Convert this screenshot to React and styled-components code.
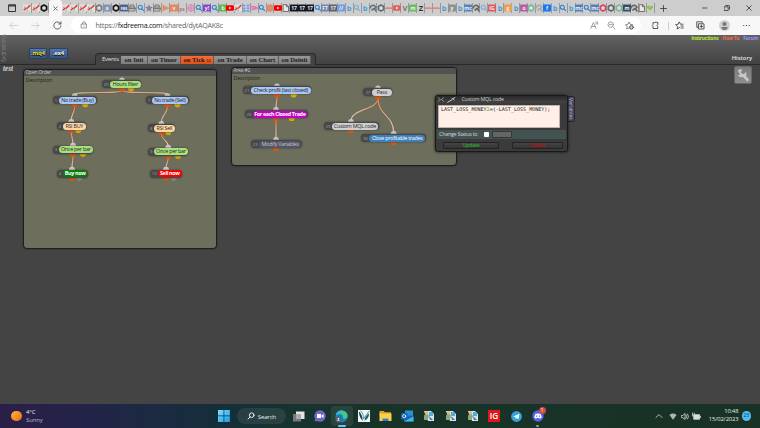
import React from 'react'
import styled, { createGlobalStyle } from 'styled-components'

const GlobalStyle = createGlobalStyle`
  * {
    box-sizing: border-box;
  }

  body {
    margin: 0;
    overflow: hidden;
    font-family: 'Open Sans', 'Noto Sans', sans-serif;
  }
`

const Screen = styled.div`
  display: flex;
  flex-direction: column;
  width: 760px;
  height: 428px;
  background: #444;
`

const TabStrip = styled.div`
  display: flex;
  align-items: center;
  height: 16px;
  padding-left: 7px;
  background: #cdcdcd;
`

const TabMenu = styled.div`
  width: 16.5px;
  height: 16px;
`

const Tab = styled.div`
  flex: none;
  display: flex;
  align-items: center;
  justify-content: center;
  width: ${p => p.$width}px;
  height: 10px;
  border-right: 1px solid #999;
`

const ActiveTab = styled.div`
  flex: none;
  display: flex;
  align-items: center;
  justify-content: center;
  width: 13.6px;
  height: 16px;
  border-radius: 3px 3px 0 0;
  background: #f7f7f7;
`

const NewTab = styled.div`
  display: flex;
  margin-left: 5px;
`

const WindowButtons = styled.div`
  display: flex;
  align-items: center;
  gap: 16px;
  margin-left: auto;
  padding-right: 8px;
`

const AddressRow = styled.div`
  display: flex;
  align-items: center;
  height: 19px;
  background: #f7f7f7;
`

const NavButtons = styled.div`
  display: flex;
  align-items: center;
  gap: 13px;
  width: 71px;
  padding-left: 9px;
`

const UrlField = styled.div`
  display: flex;
  align-items: center;
  width: 570px;
  height: 16px;
  margin-bottom: 1px;
  padding: 0 7px 0 9px;
  border-radius: 8px;
  background: #fff;
`

const Url = styled.span`
  flex: 1;
  margin-left: 7.5px;
  font-size: 7.1px;
  line-height: 16px;
  letter-spacing: -0.26px;
  color: #666;

  b {
    font-weight: 400;
    color: #111;
  }
`

const FieldIcons = styled.div`
  display: flex;
  align-items: center;
  gap: 8.6px;
`

const ToolIcons = styled.div`
  display: grid;
  grid-template-columns: 17px 7.5px 21px 23px 24px 7px;
  align-items: center;
  padding-left: 9.5px;
`

const Divider = styled.div`
  width: 1px;
  height: 8px;
  background: #ccc;
`

const SiteHeader = styled.header`
  display: flex;
  height: 30px;
  background: linear-gradient(#626262, #424242);
  border-bottom: 1px solid #292929;
`

const Brand = styled.div`
  width: 8px;
  height: 28px;
  padding-top: 1px;
  writing-mode: vertical-rl;
  transform: rotate(180deg);
  font-size: 6.2px;
  line-height: 8px;
  color: #7d7d7d;
`

const FileButtons = styled.div`
  display: flex;
  gap: 2px;
  padding: 13px 0 0 20.5px;
`

const FileButton = styled.div`
  width: 18.5px;
  height: 11px;
  border: 1px solid #293f64;
  border-radius: 1px;
  background: linear-gradient(#5377ac, #365582);
  color: ${p => p.$color};
  font: bold 6px/8px 'Open Sans', sans-serif;
  letter-spacing: -0.25px;
  text-align: center;
  text-shadow: 0 0 1px #000, 0 1px 1px #000;
`

const EventBar = styled.nav`
  display: flex;
  width: 220.5px;
  height: 12px;
  margin: 18px 0 0 27.5px;
  padding: 2px 4px 0 6px;
  border: 1px solid #292929;
  border-bottom: 0;
  border-radius: 4px 4px 0 0;
  background: #434343;
`

const EventLabel = styled.span`
  flex: none;
  width: 19px;
  font-size: 5.9px;
  line-height: 7px;
  letter-spacing: -0.2px;
  color: #e0e0e0;
`

const EventTab = styled.div`
  flex: none;
  width: ${p => p.$width}px;
  height: 8px;
  border-right: 1px solid #5d5d5d;
  background: ${p => (p.$active ? 'linear-gradient(#f56f35, #e34f1b)' : 'linear-gradient(#969696, #7c7c7c)')};
  color: #202020;
  font: bold 6.6px/8px 'Liberation Serif', serif;
  text-align: center;
  white-space: nowrap;

  small {
    font-size: 4px;
  }
`

const HeaderRight = styled.div`
  display: flex;
  flex-direction: column;
  align-items: flex-end;
  gap: 12px;
  margin-left: auto;
`

const Links = styled.div`
  display: flex;
  gap: 4px;
  padding-right: 2px;
  font-size: 4.9px;
  font-weight: 700;
  line-height: 7px;
  letter-spacing: -0.22px;
`

const SiteLink = styled.a`
  color: ${p => p.$color};
`

const History = styled.div`
  padding-right: 8px;
  font-size: 5.8px;
  font-weight: 600;
  line-height: 8px;
  color: #e4e4e4;
`

const Canvas = styled.main`
  position: relative;
  flex: 1;
  background: #444;
`

const ProjectName = styled.div`
  position: absolute;
  left: 3px;
  top: 0;
  font: italic bold 7.2px/8px 'Liberation Serif', serif;
  color: #d8d8d8;
`

const Wrench = styled.div`
  position: absolute;
  left: 733.5px;
  top: 1px;
  width: 18px;
  height: 18px;
  border: 1px solid #686868;
  border-radius: 2px;
  background: linear-gradient(#7c7c7c, #8e8e8e);
`

const Area = styled.section`
  position: absolute;
  left: ${p => p.$x}px;
  top: ${p => p.$y}px;
  width: ${p => p.$width}px;
  height: ${p => p.$height}px;
  overflow: hidden;
  border: 1px solid #1e1e1e;
  border-radius: 4px;
  background: #6d6f5c;
  box-shadow: 0 0 2px #222;
`

const AreaTitle = styled.div`
  height: 6px;
  padding-left: 1.5px;
  background: #525252;
  color: #c8c8c8;
  font-size: 4.8px;
  letter-spacing: -0.12px;
  line-height: 5px;
`

const AreaText = styled.div`
  padding-left: 1.5px;
  color: #22221c;
  font-size: 5.3px;
  letter-spacing: -0.15px;
  line-height: 8px;
`

const Wires = styled.svg`
  position: absolute;
  left: 0;
  top: 0;
`

const Block = styled.div`
  position: absolute;
  left: ${p => p.$x}px;
  top: ${p => p.$y - 4}px;
  display: flex;
  width: ${p => p.$width}px;
  height: 8px;
  padding: 0.5px;
  border-radius: 4px;
  background: #484848;
  box-shadow: 0 0 2px #333;
`

const BlockId = styled.span`
  flex: none;
  width: ${p => p.$width}px;
  color: #a4a4a4;
  font-size: 4.2px;
  line-height: 7px;
  text-align: center;
`

const BlockLabel = styled.span`
  flex: 1;
  min-width: 0;
  border-radius: 3.5px;
  background: ${p => p.$fill};
  color: ${p => p.$color};
  font-size: 5.4px;
  font-weight: ${p => (p.$bold ? 700 : 500)};
  letter-spacing: ${p => (p.$bold ? -0.36 : -0.27)}px;
  line-height: 7px;
  text-align: center;
  white-space: nowrap;
`

const Dialog = styled.section`
  position: absolute;
  left: 435px;
  top: 30px;
  width: 133px;
  height: 57px;
  padding: 0 1px;
  border: 1px solid #191919;
  border-radius: 3px;
  background: #3b3b3b;
  box-shadow: 0 0 3px #111;
`

const DialogTitle = styled.div`
  display: flex;
  align-items: center;
  gap: 3px;
  height: 7px;
  margin: 0 -1px;
  padding-left: 2px;
  background: linear-gradient(#292929, #444);
  color: #d4d4d4;
  font-size: 5.2px;
  line-height: 7px;

  span {
    margin-left: 2.5px;
    letter-spacing: -0.15px;
  }
`

const Code = styled.pre`
  width: 122px;
  height: 23px;
  margin: 2px 0 2px 1px;
  padding: 0 2px;
  border: 1px solid #bbb4b0;
  background: #ffefe6;
  color: #222;
  font: 5.05px/7px 'DejaVu Sans Mono', monospace;

  b {
    font-weight: 400;
    color: #18a818;
  }
`

const StatusRow = styled.div`
  display: flex;
  align-items: center;
  height: 9px;
  padding-left: 2px;
  background: #435352;
  color: #d2d6d6;
  font-size: 5.4px;
  line-height: 9px;
`

const StatusLabel = styled.span`
  width: 45px;
  letter-spacing: -0.27px;
  white-space: nowrap;
`

const Checkbox = styled.span`
  width: 5px;
  height: 5px;
  border-radius: 1px;
  background: #fff;
`

const StatusValue = styled.span`
  width: 20px;
  height: 7px;
  margin-left: 3px;
  border: 1px solid #303737;
  border-radius: 1px;
  background: #656565;
`

const DialogButtons = styled.div`
  display: flex;
  gap: 13px;
  padding: 3px 0 0 6px;
`

const DialogButton = styled.div`
  width: ${p => p.$width}px;
  height: 7px;
  border: 1px solid #222;
  border-radius: 1px;
  background: linear-gradient(#444, #353535);
  color: ${p => p.$color};
  font-size: 5.2px;
  font-weight: 500;
  letter-spacing: -0.15px;
  line-height: 5px;
  text-align: center;
`

const SideTab = styled.div`
  position: absolute;
  left: 567px;
  top: 31px;
  width: 8px;
  height: 25.5px;
  border: 1px solid #26262f;
  border-radius: 0 2px 2px 0;
  background: #44445a;
  color: #c4c4d6;
  font-size: 5.1px;
  line-height: 6px;
  text-align: center;
  writing-mode: vertical-rl;
`

const Taskbar = styled.footer`
  display: grid;
  grid-template-columns: 207px 1fr 112px;
  height: 24px;
  background: linear-gradient(90deg, #2b1f48 0, #242349 80px, #1b2a41 155px, #152e39 220px, #17332f 290px, #183328 400px, #183225 760px);
  color: #e6ebe9;
`

const Weather = styled.div`
  display: flex;
  align-items: center;
  gap: 4.5px;
  padding-left: 11px;
  font-size: 6px;
  line-height: 8px;
  letter-spacing: -0.15px;

  small {
    display: block;
    font-size: 6px;
    color: #b4b3c6;
  }
`

const Sun = styled.div`
  width: 10.5px;
  height: 10.5px;
  border-radius: 50%;
  background: linear-gradient(135deg, #fcb83a, #ee6d12);
`

const Apps = styled.div`
  display: flex;
  align-items: center;
  padding-left: 6px;
`

const AppSlot = styled.div`
  position: relative;
  display: flex;
  align-items: center;
  justify-content: center;
  width: 21.8px;
  height: 20px;
  border-radius: 2px;
  background: ${p => (p.$active ? '#ffffff14' : 'none')};
`

const RunMark = styled.i`
  position: absolute;
  bottom: -1px;
  width: ${p => p.$width}px;
  height: 1.6px;
  border-radius: 1px;
  background: ${p => p.$color};
`

const Badge = styled.i`
  position: absolute;
  left: 11.5px;
  top: 1px;
  width: 7px;
  height: 7px;
  border-radius: 50%;
  background: #d84848;
  color: #fff;
  font: normal 5px/7px 'Open Sans', sans-serif;
  text-align: center;
`

const Search = styled.div`
  display: flex;
  align-items: center;
  gap: 2.5px;
  width: 49px;
  height: 16px;
  margin: 0 1.5px 0 2px;
  padding-left: 10.5px;
  border-radius: 8px;
  background: #ffffff14;
  font-size: 6.1px;
  letter-spacing: -0.2px;
`

const Tray = styled.div`
  display: flex;
  align-items: center;
  padding-left: 7px;
`

const Clock = styled.div`
  width: 37.5px;
  font-size: 5.8px;
  line-height: 7.8px;
  text-align: right;
  letter-spacing: -0.1px;
`

const Notices = styled.div`
  width: 9.5px;
  height: 9.5px;
  margin-left: 3px;
  border-radius: 50%;
  background: #4cbcf2;
  color: #10334a;
  font-size: 5px;
  line-height: 9px;
  text-align: center;
`

function Glyph({ w = 9, h = w, box, color = '#333', sw = 0.8, d, children }) {
  return (
    <svg
      width={w}
      height={h}
      viewBox={box || `0 0 ${w} ${h}`}
      fill="none"
      stroke={color}
      strokeWidth={sw}
      strokeLinecap="round"
      strokeLinejoin="round"
      style={{ flex: 'none', display: 'block' }}
    >
      {d && <path d={d} />}
      {children}
    </svg>
  )
}

// tab favicons: "kind" or "kind:color" or "kind:color:letters"
const FIRST_TABS = ['candle', 'candle', 'ring:#111']
const TABS = `candle candle candle candle ring:#777 box:#8395b5:a ring:#151515 box:#4b6490:FBS robot search star robot
tri box:#e58760:v txt:#bc7770:ps globe:#df79b0 search box:#8145ce:y! search box:#5cba4a:b yt:#f00000 candle grid
fish:#e479b0 search dot:#d88e6f yt:#f00000 doc box:#111722:17 box:#111722:17 box:#111722:17 search box:#7185ad:FT
box:#5d6268:17 box:#729de0:// b search:#7aafda b face:#66747a ring:#5d7074 strip yt:#df6262 txt:#777:V
box:#67bd66:m txt:#333:Z strip strip b box:#909090:y b box:#5782bd:mc face:#666 search:#7aafda
box:#db5960:IG b box:#eba04e:g b box:#b85ca5:o ring:#74b99b face:#aaa box:#1877f2:f b search b box:#547fb9:mc
search box:#547fb9:mc ring:#d74462 ring:#666 ring:#79b797 box:#344a66:m face:#666 doc heart`.split(/\s+/)

function Favicon({ icon }) {
  const [kind, color, text] = icon.split(':')
  switch (kind) {
    case 'candle':
      return (
        <Glyph w={8} sw={1.5}>
          <path d="M0 .5h8v7H0Z" fill="#e4e0dd" stroke="none" />
          <path d="m1.2 5.8 2-1.6M4.4 4 6.8 1.6" stroke="#e03c3c" />
          <path d="m1.4 3.4.6-.5M3.6 6.8l1-.8" stroke="#6cb06c" strokeWidth="1" />
        </Glyph>
      )
    case 'ring':
      return (
        <Glyph w={8} color={color} sw={1.7}>
          <path d="M4 1.1 6.6 2.5v3L4 6.9 1.4 5.5v-3Z" fill="#ddd" />
        </Glyph>
      )
    case 'box':
      return (
        <Glyph w={8} color="none">
          <rect y=".5" width="8" height="7" rx=".7" fill={color} />
          <text x="4" y="6" fontSize={text.length > 2 ? 3.8 : 5} fontWeight="700" textAnchor="middle" fill="#f2f2f2">{text}</text>
        </Glyph>
      )
    case 'txt':
    case 'b':
      return (
        <Glyph w={8} color="none">
          <text x="4" y="6.6" fontSize={text === 'ps' ? 5 : 7.5} fontWeight="700" textAnchor="middle" fill={color || '#48a0da'}>{text || 'b'}</text>
        </Glyph>
      )
    case 'search':
      return <Glyph w={8} color={color || '#2e83cf'} sw={1.1} d="M4.8 4.8 6.7 6.7M5.3 3.3a2 2 0 1 1-4 0 2 2 0 0 1 4 0Z" />
    case 'robot':
      return (
        <Glyph w={8} color="#777" sw={1}>
          <path d="M1 3h6v4H1zM2 3V1h4v2M0 4.5h8M2.6 5h.2M5.2 5h.2" />
        </Glyph>
      )
    case 'star':
      return (
        <Glyph w={8} color="none">
          <path d="m4 .3 1 2.5 2.8.2L5.6 5l.8 2.8L4 6.2 1.5 7.8 2.3 5 .2 3 3 2.8Z" fill="#6783b5" />
          <path d="m3 2 3 2-3 2Z" fill="#d9656a" />
        </Glyph>
      )
    case 'tri':
      return <Glyph w={8} color="none"><path d="m.5.5 7.5 3.8-7.5 3Z" fill="#e2916c" /></Glyph>
    case 'globe':
      return <Glyph w={8} color={color} sw={1} d="M7.2 4A3.2 3.2 0 1 1 .8 4a3.2 3.2 0 0 1 6.4 0ZM4 1v6M1 4h6" />
    case 'yt':
      return (
        <Glyph w={8} color="none">
          <rect y="1.3" width="8" height="5.4" rx="1.2" fill={color} />
          <path d="m3.2 2.8 2.2 1.2-2.2 1.2Z" fill="#fff" />
        </Glyph>
      )
    case 'grid':
      return <Glyph w={8} color="#6fa5e2" sw={2} d="M1.5 1.5h1M5.5 1.5h1M1.5 4.5h1M5.5 4.2h1M2 7h1M5.5 7h1" />
    case 'fish':
      return <Glyph w={8} color={color} sw={1.8} d="M1 3q3-1 6 1M2 5.3l4-.7" />
    case 'dot':
      return <Glyph w={8} color="none"><circle cx="4" cy="4" r="3.8" fill={color} /></Glyph>
    case 'doc':
      return <Glyph w={8} color="#666" sw={0.9}><path d="M1.5.7h3l2 2v4.8h-5ZM4.5.7v2h2" fill="#e6e6e6" /></Glyph>
    case 'strip':
      return <Glyph w={8} color="#dc8a7a" sw={1.3} d="M.5 4.3h7M2 3.6h1M5 3.6h1" />
    case 'face':
      return (
        <Glyph w={8} color={color} sw={1.6}>
          <path d="M1 4q1-3 4-2.7l2 1.7-1 1.3M3 6l2-1.5L7 7" />
        </Glyph>
      )
    default:
      return <Glyph w={8} color="none"><path d="M4 6.8.8 3.7Q.5 1.6 2.4 1.6 3.5 1.7 4 2.6q.8-1 2-.9 1.4.5 1.1 2Z" fill="#8bc653" /></Glyph>
  }
}

const BLUE = '#a9c7f5'
const GREEN = '#a9df7d'
const PEACH = '#ffd8a6'
const SILVER = '#cfcfcf'

// x / y are relative to the canvas, y is the middle of the block
const BLOCKS = [
  { id: 20, label: 'Hours filter', x: 102, y: 19.3, w: 39, idw: 7.5, fill: GREEN, pin: 122, alt: 131 },
  { id: 1, label: 'No trade (Buy)', x: 52.5, y: 35.2, w: 44, idw: 5.8, fill: BLUE, pin: 74.7, alt: 85.3 },
  { id: 7, label: 'No trade (Sell)', x: 145.5, y: 35.2, w: 43, idw: 5.8, fill: BLUE, pin: 167.5, alt: 177.5 },
  { id: 2, label: 'RSI BUY', x: 56.5, y: 61, w: 29.5, idw: 6, fill: PEACH, pin: 71.3, alt: 78.3 },
  { id: 8, label: 'RSI Sell', x: 147.7, y: 63, w: 27.5, idw: 5.8, fill: PEACH, pin: 161.3, alt: 168.3 },
  { id: 3, label: 'Once per bar', x: 52.5, y: 84.7, w: 40.7, idw: 5.8, fill: GREEN, pin: 73, alt: 83 },
  { id: 9, label: 'Once per bar', x: 147.7, y: 86.7, w: 40.5, idw: 5.8, fill: GREEN, pin: 168.3, alt: 178 },
  { id: 4, label: 'Buy now', x: 56.5, y: 108.6, w: 31.3, idw: 6, fill: '#078007', color: '#fff', bold: true, pin: 72, alt: 79.3, altColor: '#888' },
  { id: 13, label: 'Sell now', x: 150, y: 108.6, w: 32, idw: 7.5, fill: '#f80000', color: '#fff', bold: true, pin: 166, alt: 173.7, altColor: '#888' },
  { id: 21, label: 'Check profit (last closed)', x: 242.5, y: 25.4, w: 68.7, idw: 7.8, fill: BLUE, pin: 277, alt: 293.7 },
  { id: 26, label: 'For each Closed Trade', x: 245, y: 49, w: 62.7, idw: 7, fill: '#c500c5', color: '#fff', bold: true, pin: 276, alt: 291.7 },
  { id: 23, label: 'Modify Variables', x: 250.7, y: 79, w: 51, idw: 8, fill: '#53536a', color: '#c4c4c4', pin: 276 },
  { id: 27, label: 'Pass', x: 363.3, y: 27.3, w: 29, idw: 8, fill: SILVER, pin: 378 },
  { id: 29, label: 'Custom MQL code', x: 324, y: 61, w: 54.7, idw: 7, fill: SILVER, pin: 351 },
  { id: 36, label: 'Close profitable trades', x: 361.3, y: 73, w: 64.5, idw: 7.4, fill: '#3e80bb', color: '#fff', pin: 393.7 }
]

const LINKS = [[20, 1], [20, 7], [1, 2], [7, 8], [2, 3], [8, 9], [3, 4], [9, 13], [21, 26], [26, 23], [27, 29], [27, 36]]

function wire([from, to]) {
  const a = BLOCKS.find(b => b.id === from)
  const b = BLOCKS.find(b => b.id === to)
  const y1 = a.y + 6
  const y2 = b.y - 5.5
  const mid = (y1 + y2) / 2
  if (from === 20) {
    return { d: `M${a.pin} ${y1}C${a.pin} ${y1 + 4} ${b.pin} ${y2 - 4} ${b.pin} ${y2}`, y1, y2 }
  }
  return { d: `M${a.pin} ${y1}C${a.pin} ${mid} ${b.pin} ${mid} ${b.pin} ${y2}`, y1, y2 }
}

function Flow() {
  return (
    <>
      <Wires width="435" height="190">
        {LINKS.map((link, i) => {
          const { d, y1, y2 } = wire(link)
          return (
            <g key={i} fill="none">
              <linearGradient id={`wire${i}`} gradientUnits="userSpaceOnUse" x1="0" x2="0" y1={y1} y2={y2}>
                <stop offset="0" stopColor="#e7854e" />
                <stop offset="1" stopColor="#d9ccd0" />
              </linearGradient>
              <path d={d} stroke="#55503f" strokeWidth="2.2" opacity=".4" />
              <path d={d} stroke={`url(#wire${i})`} strokeWidth="1.2" />
            </g>
          )
        })}
        {BLOCKS.map(b => (
          <g key={b.id}>
            <circle cx={b.pin} cy={b.y - 4} r="2.9" fill="#d3c6cd" />
            <circle cx={b.pin} cy={b.y + 4} r="3.1" fill="#df5512" />
            {b.alt && <circle cx={b.alt} cy={b.y + 4} r="3.1" fill={b.altColor || '#d6a90c'} />}
          </g>
        ))}
      </Wires>
      {BLOCKS.map(b => (
        <Block key={b.id} $x={b.x} $y={b.y} $width={b.w}>
          <BlockId $width={b.idw}>{b.id}</BlockId>
          <BlockLabel $fill={b.fill} $color={b.color || '#262626'} $bold={b.bold}>{b.label}</BlockLabel>
        </Block>
      ))}
    </>
  )
}

function Browser() {
  return (
    <>
      <TabStrip>
        <TabMenu>
          <Glyph w={16} color="#333" sw={1}>
            <path d="M2 5h6.5v6.5H2ZM2 6h6.5M2 5h6.5" />
          </Glyph>
        </TabMenu>
        {FIRST_TABS.map((icon, i) => <Tab key={i} $width={8.4}><Favicon icon={icon} /></Tab>)}
        <ActiveTab><Glyph w={5} d="m.7.7 3.6 3.6M4.3.7.7 4.3" color="#555" /></ActiveTab>
        {TABS.map((icon, i) => <Tab key={i} $width={i < 16 ? 8.32 : 7.93}><Favicon icon={icon} /></Tab>)}
        <NewTab><Glyph w={7} d="M3.5.5v6M.5 3.5h6" /></NewTab>
        <WindowButtons>
          <Glyph w={6} d="M.5 3h4.5" />
          <Glyph w={6} d="M.5 1.8h3.7v3.7H.5ZM1.8.5h3q.7 0 .7.7v3" />
          <Glyph w={6} d="m.7.7 4.6 4.6M5.3.7.7 5.3" />
        </WindowButtons>
      </TabStrip>
      <AddressRow>
        <NavButtons>
          <Glyph w={9} color="#c9c9c9" d="M8.5 4.5H1M4 1.5l-3 3 3 3" />
          <Glyph w={9} color="#c9c9c9" d="M.5 4.5H8M5 1.5l3 3-3 3" />
          <Glyph w={9} color="#444" d="M7.7 3A3.6 3.6 0 1 0 8 5M8 .7V3H5.8" />
        </NavButtons>
        <UrlField>
          <Glyph w={8} color="#777" sw={0.7} d="M1.5 3h5v4h-5ZM2.6 3V2q0-1.3 1.4-1.3T5.4 2v1M4 4.8v.4" />
          <Url>https://<b>fxdreema.com</b>/shared/dytAQAK8c</Url>
          <FieldIcons>
            <Glyph w={9} color="#777" sw={0.7} d="m.8 7.5 2.6-6 2.6 6M1.7 5.5h3.4M6 1q1 .8 0 2M7.3.5q1.4 1.5 0 3" />
            <Glyph w={9} color="#888" d="m5.5 5.5 2.7 2.7M6.4 3.6a2.7 2.7 0 1 1-5.4 0 2.7 2.7 0 0 1 5.4 0ZM2.5 3.6h2.3" />
            <Glyph w={9} color="#555" sw={0.7}>
              <path d="M3.8 7 1.8 8l.3-2.5L.5 3.8l2.3-.5L4 1l1.2 2.3 2.5.5" />
              <circle cx="6.4" cy="6.3" r="1.9" fill="#555" />
              <path d="M5.3 6.3h2.2M6.4 5.2v2.2" stroke="#fff" />
            </Glyph>
          </FieldIcons>
        </UrlField>
        <ToolIcons>
          <Glyph w={9} color="#333" d="M6.2 1.6Q5 .2 3.8 1.6H2v1.9Q.3 4.5 2 5.6v1.9h4.8V5.8Q5 4.5 6.8 3.5V1.6Z" />
          <Divider />
          <Glyph w={9} color="#333" sw={0.8} d="M4.5 6.5 2.2 8l.4-2.5L.7 3.6l2.5-.4L4.3.9l1.2 2.3H8M6 5h2.3M6 7h2.3" />
          <Glyph w={9} color="#333" d="M2.8 2.8H8V8H2.8ZM1.8 6.3H.8V.8h5.4v1M5.4 4v2.8M4 5.4h2.8" />
          <Glyph w={11} color="none">
            <circle cx="5.5" cy="5.5" r="5.5" fill="#d2cfcc" />
            <circle cx="5.5" cy="4" r="2.1" fill="#777" />
            <path d="M2.2 7h6.6q-.5 3-3.3 3T2.2 7Z" fill="#777" />
          </Glyph>
          <Glyph w={7} h={3} color="#333" sw={1.1} d="M.7 1.5h.1M3.4 1.5h.1M6.1 1.5h.1" />
        </ToolIcons>
      </AddressRow>
    </>
  )
}

function Site() {
  return (
    <>
      <SiteHeader>
        <Brand>fxdreema</Brand>
        <FileButtons>
          <FileButton $color="#f0e332">.mq4</FileButton>
          <FileButton $color="#fff">.ex4</FileButton>
        </FileButtons>
        <EventBar>
          <EventLabel>Events</EventLabel>
          <EventTab $width={27}>on Init</EventTab>
          <EventTab $width={33}>on Timer</EventTab>
          <EventTab $width={33} $active>on Tick <small>12</small></EventTab>
          <EventTab $width={33}>on Trade</EventTab>
          <EventTab $width={32}>on Chart</EventTab>
          <EventTab $width={32}>on Deinit</EventTab>
        </EventBar>
        <HeaderRight>
          <Links>
            <SiteLink $color="#b5f02c">Instructions</SiteLink>
            <SiteLink $color="#ff6843">How To</SiteLink>
            <SiteLink $color="#9593fa">Forum</SiteLink>
          </Links>
          <History>History</History>
        </HeaderRight>
      </SiteHeader>
      <Canvas>
        <ProjectName>test</ProjectName>
        <Wrench>
          <Glyph w={16} color="none" box="0 0 17 16">
            <path d="M3 3.2q2-2 4.7-.7L6.2 5l1.5 2 2.6-.3.6-2.4q2 2 .6 4.5L15 13.2 13 15 8.4 10.2Q4.8 11.4 3 8l2.6-.3Z" fill="#c9c9c9" />
          </Glyph>
        </Wrench>
        <Area $x={23} $y={3.5} $width={194} $height={180}>
          <AreaTitle>Open Order</AreaTitle>
          <AreaText>Description</AreaText>
        </Area>
        <Area $x={231} $y={2} $width={226} $height={98.5}>
          <AreaTitle>Area #2</AreaTitle>
          <AreaText>Description</AreaText>
        </Area>
        <Flow />
        <SideTab>Variables</SideTab>
        <Dialog>
          <DialogTitle>
            <Glyph w={6} h={5} color="#aaa" d="m.5.8 2 1.7-2 1.7M5.5.8l-2 1.7 2 1.7" />
            <Glyph w={9} h={6} color="#ccc" sw={1} d="M.7 5.2 5 2.7M5 1.2l2 2M6 1.7l2-1.2" />
            <span>Custom MQL code</span>
          </DialogTitle>
          <Code>LAST_LOSS_MONEY<b>2</b>=(-LAST_LOSS_MONEY);</Code>
          <StatusRow>
            <StatusLabel>Change Status to</StatusLabel>
            <Checkbox />
            <StatusValue />
          </StatusRow>
          <DialogButtons>
            <DialogButton $width={56} $color="#25c825">Update</DialogButton>
            <DialogButton $width={51} $color="#d80000">Delete</DialogButton>
          </DialogButtons>
        </Dialog>
      </Canvas>
    </>
  )
}

function ChartApp() {
  return (
    <AppSlot>
      <Glyph w={12} color="none">
        <path d="M1 1h7l3 3v7H5Z" fill="#d6e7ec" />
        <path d="M6 2h4v4H6Z" fill="#58a8d8" />
        <path d="M1 5.5 4 3l2 3-1.5 4H1Z" fill="#8fa77b" />
        <circle cx="3.5" cy="3" r="1.8" fill="#e0b773" />
        <path d="m6 6 4 4H7Z" fill="#3b79ac" />
      </Glyph>
    </AppSlot>
  )
}

function WindowsTaskbar() {
  return (
    <Taskbar>
      <Weather>
        <Sun />
        <div>4°C<small>Sunny</small></div>
      </Weather>
      <Apps>
        <AppSlot>
          <Glyph w={12} color="none">
            <linearGradient id="win" x1="0" y1="0" x2="1" y2="1">
              <stop stopColor="#79e3ff" />
              <stop offset="1" stopColor="#169cea" />
            </linearGradient>
            <path d="M0 0h5.6v5.6H0ZM6.3 0h5.6v5.6H6.3ZM0 6.3h5.6v5.6H0ZM6.3 6.3h5.6v5.6H6.3Z" fill="url(#win)" />
          </Glyph>
        </AppSlot>
        <Search>
          <Glyph w={8} color="#fff" sw={0.9} d="m3 5-2 2M7 3.2a2.3 2.3 0 1 1-4.6 0 2.3 2.3 0 0 1 4.6 0Z" />
          Search
        </Search>
        <AppSlot>
          <Glyph w={13} color="none">
            <rect x="1" y="4" width="8" height="7.5" fill="#777" />
            <rect x="4" y="1.5" width="8.5" height="7.5" fill="#e4e4e4" />
            <path d="M4 4h5v5H4Z" fill="#aaa" />
          </Glyph>
        </AppSlot>
        <AppSlot>
          <Glyph w={12} color="none">
            <path d="M6 .3a5.7 5.7 0 1 1-2.5 10.8L.7 11.6 1.2 9A5.7 5.7 0 0 1 6 .3Z" fill="#7167c6" />
            <path d="M3 4h4v4H3ZM7.6 5.5 9.5 4v4L7.6 6.8Z" fill="#fff" />
          </Glyph>
        </AppSlot>
        <AppSlot $active>
          <Glyph w={13} color="none">
            <circle cx="6.5" cy="6.5" r="6" fill="#1480c7" />
            <path d="M.7 5.5Q1.7.5 6.7.5q5.5.3 6 5.5-.2 3-3.7 3Q7.5 8.5 8 7q-.3-3-3.4-3Q2 4 .7 5.5Z" fill="#42c987" />
            <path d="M1 5.2Q2 .5 6.7.5L9 1Q5 1 5 4 2 3.7 1 5.2Z" fill="#31b6df" />
            <circle cx="3.4" cy="9.4" r="3" fill="#55646c" />
            <path d="M2 10.7Q3.4 8.8 4.8 10.7ZM2.7 8h1.5v1.4H2.7Z" fill="#eee" />
          </Glyph>
          <RunMark $width={8} $color="#63c8f4" />
        </AppSlot>
        <AppSlot>
          <Glyph w={12} color="none">
            <rect width="12" height="12" fill="#f1f6f6" />
            <path d="M.8 1.5Q4 3 4.8 11 1.5 8 .8 1.5Z" fill="#173b4e" />
            <path d="M3 1q3 3 2.5 8L11 1.2" stroke="#3c929c" strokeWidth=".9" />
            <path d="M6.5 10.8q.3-5 4.7-7.6-.2 5-4.7 7.6Z" fill="#24606f" />
          </Glyph>
        </AppSlot>
        <AppSlot>
          <Glyph w={13} h={12} color="none">
            <path d="M.5 1h4.2l1.2 1.3h6v3H.5Z" fill="#e7a31c" />
            <path d="M.5 3.5h12V11H.5Z" fill="#ffcf4a" />
            <path d="M3.5 8.6h6V11h-6Z" fill="#2a7fce" />
          </Glyph>
        </AppSlot>
        <AppSlot>
          <Glyph w={13} h={12} color="none">
            <path d="M4 .5h8v6H4Z" fill="#2c8fda" />
            <path d="M3 5.5h9.5v6H3Z" fill="#1a69b5" />
            <path d="m3 11.5 9.5-5v5Z" fill="#43b6ee" />
            <rect y="3" width="6.5" height="6.5" rx=".8" fill="#1564ae" />
            <circle cx="3.2" cy="6.2" r="1.6" stroke="#fff" />
          </Glyph>
        </AppSlot>
        <ChartApp />
        <ChartApp />
        <ChartApp />
        <AppSlot>
          <Glyph w={12} color="none">
            <rect width="12" height="12" fill="#dc1818" />
            <text x="6" y="9" fontSize="8.2" fontWeight="600" textAnchor="middle" fill="#fff">IG</text>
          </Glyph>
        </AppSlot>
        <AppSlot>
          <Glyph w={11} color="none">
            <circle cx="5.5" cy="5.5" r="5.4" fill="#31a3d9" />
            <path d="m2 5.4 6.5-2.7-1 5.5-2-1.3-1 1L4.3 6Z" fill="#fff" />
          </Glyph>
        </AppSlot>
        <AppSlot>
          <Glyph w={12} color="none">
            <circle cx="6" cy="6" r="5.7" fill="#5665e4" />
            <path d="M3.3 4q2.7-1.2 5.4 0l1 3.5L8 8.7 7.3 8H4.7L4 8.7 2.3 7.5Z" fill="#fff" />
            <path d="M4 5.5h1.2v1.2H4Zm2.8 0H8v1.2H6.8Z" fill="#5665e4" />
          </Glyph>
          <Badge>1</Badge>
          <RunMark $width={3} $color="#999" />
        </AppSlot>
      </Apps>
      <Tray>
        <Glyph w={8} color="#d8dfdc" d="m1 5.5 3-3 3 3" />
        <Glyph w={18} h={9} color="none">
          <path d="M6.5 3Q10 .2 13.5 3L10 7.7Z" fill="#aeb8b3" />
        </Glyph>
        <Glyph w={10} h={9} color="#d8dfdc" sw={0.8} d="M.6 3.5h1.2L4 1.5v6L1.8 5.7H.6ZM5.3 3q1 1.5 0 3M6.6 2q2 2.5 0 5" />
        <Glyph w={10} h={9} color="#d8dfdc" sw={0.8}>
          <path d="M3 2.7h5.5v4.5H3ZM9.5 4.2v1.3M1.5 1v3M3.3 1v3" fill="#d8dfdc" />
        </Glyph>
        <Clock>10:48<br />15/02/2023</Clock>
        <Notices>23</Notices>
      </Tray>
    </Taskbar>
  )
}

export default function App() {
  return (
    <Screen>
      <GlobalStyle />
      <Browser />
      <Site />
      <WindowsTaskbar />
    </Screen>
  )
}
